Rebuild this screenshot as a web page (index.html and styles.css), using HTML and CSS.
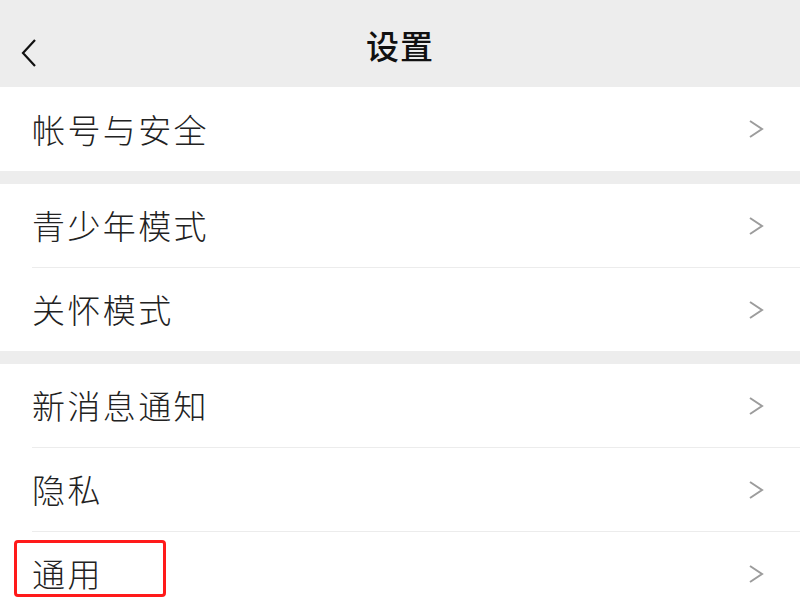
FILE: index.html
```html
<!DOCTYPE html>
<html lang="zh-CN">
<head>
<meta charset="utf-8">
<title>设置</title>
<link rel="stylesheet" href="styles.css">
</head>
<body>
<div class="page">
  <header class="topbar">
    <span class="back">
      <svg width="16" height="28" viewBox="0 0 16 28"><path d="M14 1 L2 14 L14 27" fill="none" stroke="#111" stroke-width="2.2"/></svg>
    </span>
    <h1 class="title">设置</h1>
  </header>

  <section class="group">
    <div class="item"><div class="inner"><span class="label">帐号与安全</span><svg class="chev" width="16" height="20" viewBox="0 0 16 20"><path d="M2 2 L14 10 L2 18" fill="none" stroke="#9c9c9c" stroke-width="2"/></svg></div></div>
  </section>

  <section class="group">
    <div class="item"><div class="inner"><span class="label">青少年模式</span><svg class="chev" width="16" height="20" viewBox="0 0 16 20"><path d="M2 2 L14 10 L2 18" fill="none" stroke="#9c9c9c" stroke-width="2"/></svg></div></div>
    <div class="item"><div class="inner divided"><span class="label">关怀模式</span><svg class="chev" width="16" height="20" viewBox="0 0 16 20"><path d="M2 2 L14 10 L2 18" fill="none" stroke="#9c9c9c" stroke-width="2"/></svg></div></div>
  </section>

  <section class="group">
    <div class="item"><div class="inner"><span class="label">新消息通知</span><svg class="chev" width="16" height="20" viewBox="0 0 16 20"><path d="M2 2 L14 10 L2 18" fill="none" stroke="#9c9c9c" stroke-width="2"/></svg></div></div>
    <div class="item"><div class="inner divided"><span class="label">隐私</span><svg class="chev" width="16" height="20" viewBox="0 0 16 20"><path d="M2 2 L14 10 L2 18" fill="none" stroke="#9c9c9c" stroke-width="2"/></svg></div></div>
    <div class="item highlighted"><div class="inner divided"><span class="label">通用</span><svg class="chev" width="16" height="20" viewBox="0 0 16 20"><path d="M2 2 L14 10 L2 18" fill="none" stroke="#9c9c9c" stroke-width="2"/></svg></div><span class="mark"></span></div>
  </section>
</div>
</body>
</html>
```

FILE: styles.css
```css
html, body {
  margin: 0;
  padding: 0;
  background: #ededed;
}
body {
  font-family: "Noto Sans CJK SC", "Noto Sans", sans-serif;
  color: #1b1b1b;
  overflow: hidden;
}
.page {
  width: 800px;
  height: 600px;
  overflow: hidden;
  display: flex;
  flex-direction: column;
  gap: 13px;
}
.page > * {
  flex-shrink: 0;
}
.topbar {
  height: 87px;
  margin-bottom: -13px;
  display: flex;
  align-items: center;
  justify-content: center;
  position: relative;
  background: #ededed;
}
.back {
  position: absolute;
  left: 21px;
  top: 39px;
  display: flex;
}
.title {
  margin: 0;
  font-size: 33px;
  font-weight: 500;
  color: #111;
  letter-spacing: 1px;
  line-height: 1;
  padding-top: 4px;
}
.group {
  background: #fff;
  display: flex;
  flex-direction: column;
}
.item {
  position: relative;
  padding-left: 32px;
}
.inner {
  height: 83px;
  display: flex;
  align-items: center;
  justify-content: space-between;
  padding-right: 36px;
}
.group:first-of-type .inner {
  height: 84px;
}
.inner.divided {
  border-top: 1px solid #ececec;
}
.label {
  font-size: 33px;
  font-weight: 300;
  letter-spacing: 2.4px;
  line-height: 1;
  color: #222;
}
.chev {
  display: block;
}
.mark {
  position: absolute;
  left: 14px;
  top: 9px;
  width: 146px;
  height: 51px;
  border: 3px solid #ff1a1a;
  border-radius: 4px;
}
```
